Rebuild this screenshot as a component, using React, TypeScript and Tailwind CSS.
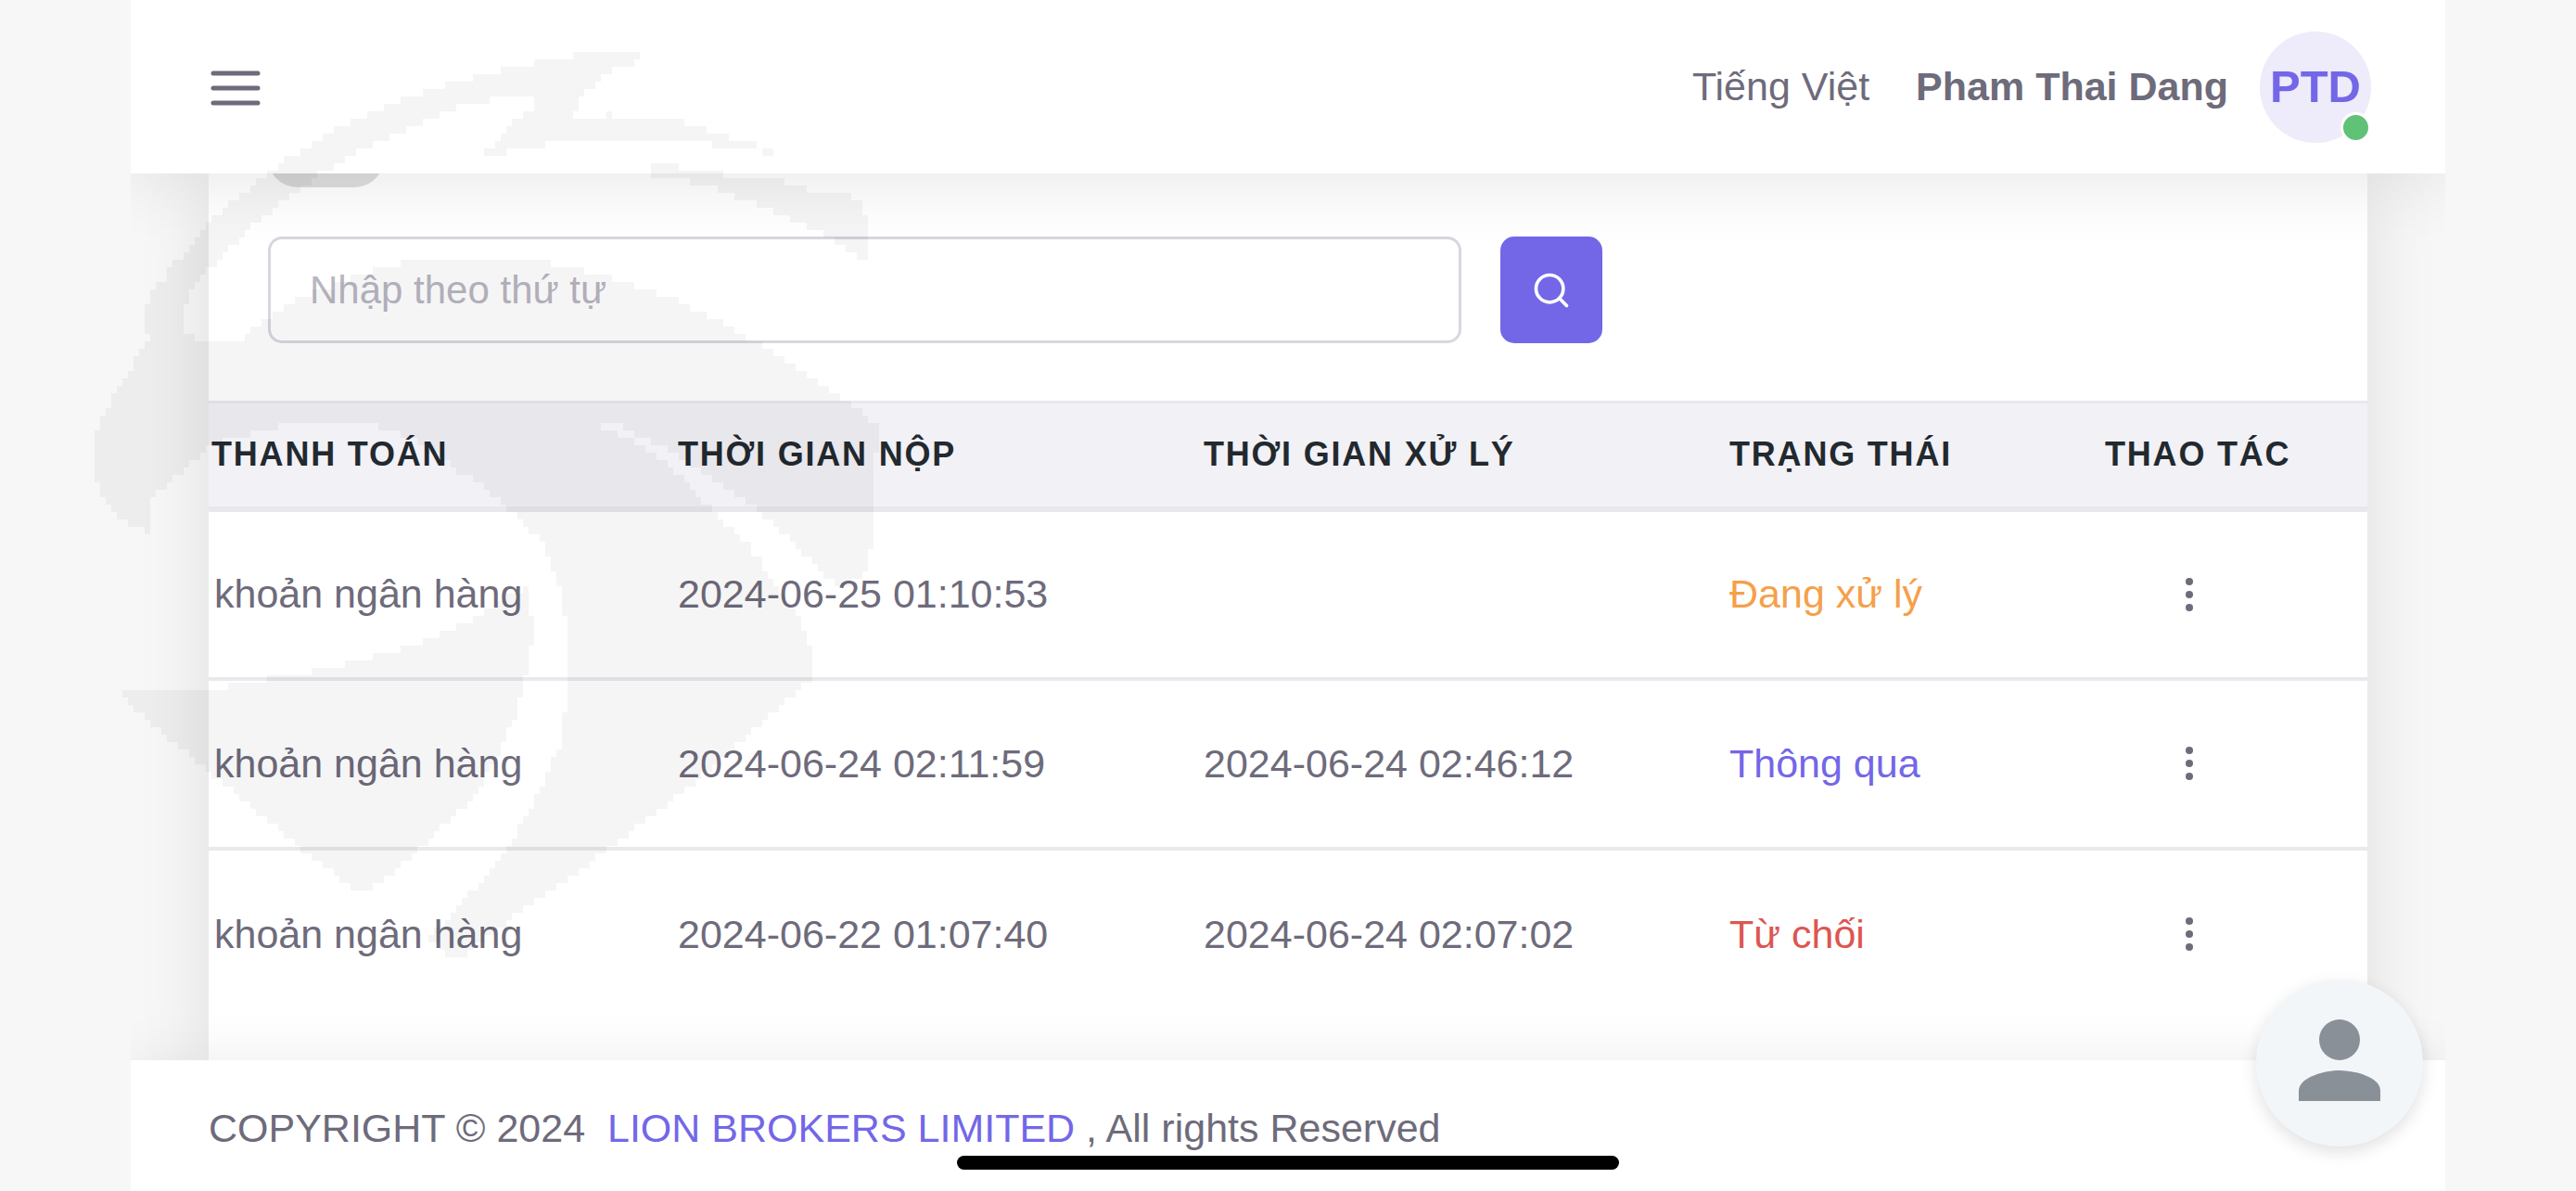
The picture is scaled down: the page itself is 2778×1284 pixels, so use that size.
import { Search } from "lucide-react";

type Point = [number, number];

const rows = [
  { method: "khoản ngân hàng", sent: "2024-06-25 01:10:53", handled: "", status: "Đang xử lý", tone: "text-[#f5a04a]" },
  { method: "khoản ngân hàng", sent: "2024-06-24 02:11:59", handled: "2024-06-24 02:46:12", status: "Thông qua", tone: "text-[#7367e8]" },
  { method: "khoản ngân hàng", sent: "2024-06-22 01:07:40", handled: "2024-06-24 02:07:02", status: "Từ chối", tone: "text-[#dd5652]" },
];

const head: Point[] = [
  [692, 59], [625, 59], [574, 68], [510, 84], [437, 107], [363, 139], [306, 175], [255, 214], [226, 239], [188, 286],
  [156, 329], [156, 357], [159, 366], [143, 396], [121, 429], [105, 464], [99, 496], [108, 536], [131, 560], [165, 578],
  [162, 540], [191, 511], [223, 482], [268, 468], [287, 461], [344, 457], [402, 459], [440, 471], [472, 493], [510, 518],
  [555, 557], [587, 587], [603, 635], [612, 682], [612, 754], [603, 806], [577, 863], [548, 915], [523, 948], [470, 1005],
  [459, 1010], [491, 1036], [548, 991], [663, 910], [765, 829], [877, 730], [877, 706], [858, 659], [835, 625], [807, 587],
  [765, 547], [740, 515], [690, 480], [638, 454], [650, 452], [702, 476], [765, 514], [816, 550], [848, 578], [893, 625],
  [906, 632], [931, 621], [941, 587], [941, 514], [949, 464], [925, 439], [861, 396], [791, 354], [727, 321], [638, 293],
  [561, 277], [459, 277], [389, 296], [332, 318], [287, 343], [255, 370], [223, 371], [198, 354], [195, 332], [210, 307],
  [236, 279], [268, 246], [312, 211], [357, 179], [421, 146], [497, 114], [536, 106], [577, 106], [580, 114], [564, 123],
  [548, 139], [529, 159], [520, 168], [539, 168], [545, 161], [584, 161], [590, 154], [762, 154], [770, 161], [816, 162],
  [829, 169], [843, 168], [816, 155], [775, 145], [740, 131], [663, 130], [657, 123], [644, 130], [612, 129], [628, 104],
  [651, 79], [692, 64],
];

const mane: Point[] = [
  [702, 179], [733, 179], [735, 187], [823, 189], [874, 205], [918, 211], [931, 220], [934, 246], [939, 282], [928, 279],
  [912, 264], [861, 239], [797, 212], [743, 195], [702, 187],
];

const jaw: Point[] = [
  [137, 742], [242, 740], [306, 728], [357, 720], [389, 711], [446, 697], [485, 678], [529, 656], [571, 628], [574, 682],
  [571, 720], [555, 772], [539, 815], [504, 867], [459, 910], [415, 948], [392, 964], [332, 920], [268, 867], [223, 829],
  [137, 758], [131, 749],
];

// The logo is low resolution art, so its outline runs in small steps.
function stepped(points: Point[]) {
  const out: string[] = [];
  points.forEach(([x, y], i) => {
    const [nx, ny] = points[(i + 1) % points.length];
    const n = Math.max(1, Math.round(Math.hypot(nx - x, ny - y) / 3));
    for (let k = 0; k < n; k++) {
      const px = Math.round((x + ((nx - x) * k) / n) / 6) * 6;
      const py = Math.round((y + ((ny - y) * k) / n) / 8) * 8;
      out.push(out.length ? `H${px}V${py}` : `M${px} ${py}`);
    }
  });
  return out.join("") + "Z";
}

function Watermark() {
  return (
    <svg className="absolute left-0 top-0 z-30 pointer-events-none" width="960" height="1060" viewBox="0 0 960 1060" fill="#000" fillOpacity="0.04" aria-hidden="true">
      <path d={stepped(head)} />
      <path d={stepped(mane)} />
      <path d={stepped(jaw)} />
    </svg>
  );
}

function Header() {
  return (
    <header className="relative z-20 h-[187px] shrink-0 bg-white pl-[84px] pr-20 flex items-center justify-between shadow-[0_12px_74px_rgba(0,0,0,0.09)]">
      <button type="button" aria-label="Menu" className="text-[#6e6b7b]">
        <svg width="56" height="40" viewBox="0 0 56 40" fill="none" stroke="currentColor" strokeWidth="5" strokeLinecap="round">
          <path d="M5 5H53M5 21H53M5 37H53" />
        </svg>
      </button>
      <div className="flex items-center">
        <a href="#" className="mr-[50px]">Tiếng Việt</a>
        <span className="font-bold mr-[34px]">Pham Thai Dang</span>
        <div className="relative w-[120px] h-[120px] rounded-full bg-[#eeebfa] flex items-center justify-center font-bold text-[49px] text-[#7367e8]">
          PTD
          <span className="absolute right-0 bottom-0 w-[33px] h-[33px] rounded-full bg-[#60c277] border-[3px] border-white" />
        </div>
      </div>
    </header>
  );
}

function Footer() {
  return (
    <footer className="relative z-10 h-[141px] shrink-0 bg-white px-[84px] pt-12 leading-[50px] shadow-[0_0_60px_rgba(0,0,0,0.08)]">
      COPYRIGHT © 2024&nbsp; <a href="#" className="text-[#7367e8]">LION BROKERS LIMITED</a> , All rights Reserved
    </footer>
  );
}

export default function App() {
  return (
    <div className="relative h-screen overflow-hidden bg-[#f7f7f7] px-[141px] font-['Liberation_Sans',Arial,sans-serif] text-[43px] text-[#6e6b7b]">
      <div className="relative h-full overflow-hidden flex flex-col">
        <Header />

        <main className="flex-1 min-h-0 px-[84px]">
          <div className="h-full bg-white shadow-[0_12px_74px_rgba(0,0,0,0.1)]">
            <div className="h-[15px] px-16 overflow-hidden flex items-end">
              <div className="w-[125px] h-16 shrink-0 rounded-full bg-[#dedede]" />
            </div>
            <form className="px-16 pt-[53px] pb-[62px] flex gap-[42px]" onSubmit={(e) => e.preventDefault()}>
              <input
                type="text"
                aria-label="Nhập theo thứ tự"
                placeholder="Nhập theo thứ tự"
                className="w-[1287px] h-[115px] rounded-[15px] border-[3px] border-[#d8d6de] px-[42px] text-[42px] placeholder:text-[#b9b6c2]"
              />
              <button type="submit" aria-label="Tìm kiếm" className="w-[110px] h-[115px] rounded-[15px] bg-[#7367e8] text-white flex items-center justify-center">
                <Search className="w-11 h-11" strokeWidth={2} />
              </button>
            </form>

            <table className="w-full table-fixed border-collapse text-left">
              <colgroup>
                <col className="w-[506px]" />
                <col className="w-[567px]" />
                <col className="w-[567px]" />
                <col className="w-[405px]" />
                <col />
              </colgroup>
              <thead>
                <tr className="h-[115px] bg-[#f2f1f6] border-t-[3px] border-b-[6px] border-[#e9e8ed] text-[36px] text-[#22292f] tracking-wider whitespace-nowrap">
                  <th className="pl-[3px]">THANH TOÁN</th>
                  <th>THỜI GIAN NỘP</th>
                  <th>THỜI GIAN XỬ LÝ</th>
                  <th>TRẠNG THÁI</th>
                  <th>THAO TÁC</th>
                </tr>
              </thead>
              <tbody>
                {rows.map((r) => (
                  <tr key={r.sent} className="h-[183px] border-b-4 border-[#e9e8ed] last:border-b-0">
                    <td className="pl-1.5">{r.method}</td>
                    <td>{r.sent}</td>
                    <td>{r.handled}</td>
                    <td className={r.tone}>{r.status}</td>
                    <td>
                      <button type="button" aria-label="Thao tác" className="block ml-[70px]">
                        <svg width="42" height="42" viewBox="0 0 42 42" fill="currentColor">
                          <circle cx="21" cy="7" r="4" />
                          <circle cx="21" cy="21" r="4" />
                          <circle cx="21" cy="35" r="4" />
                        </svg>
                      </button>
                    </td>
                  </tr>
                ))}
              </tbody>
            </table>
          </div>
        </main>

        <Footer />
      </div>

      <Watermark />

      <button type="button" aria-label="Hỗ trợ" className="absolute z-40 right-[165px] bottom-12 w-[180px] h-[180px] pb-1.5 rounded-full bg-[#f3f6f9] flex items-center justify-center shadow-[0_6px_18px_rgba(0,0,0,0.12)]">
        <svg width="88" height="88" viewBox="0 0 88 88" fill="#8a9097">
          <circle cx="44" cy="22" r="22" />
          <path d="M0 88V77C0 62 29 55 44 55S88 62 88 77V88Z" />
        </svg>
      </button>

      <div className="absolute z-50 left-1/2 bottom-[23px] w-[714px] h-[15px] -translate-x-1/2 rounded-full bg-black" />
    </div>
  );
}
